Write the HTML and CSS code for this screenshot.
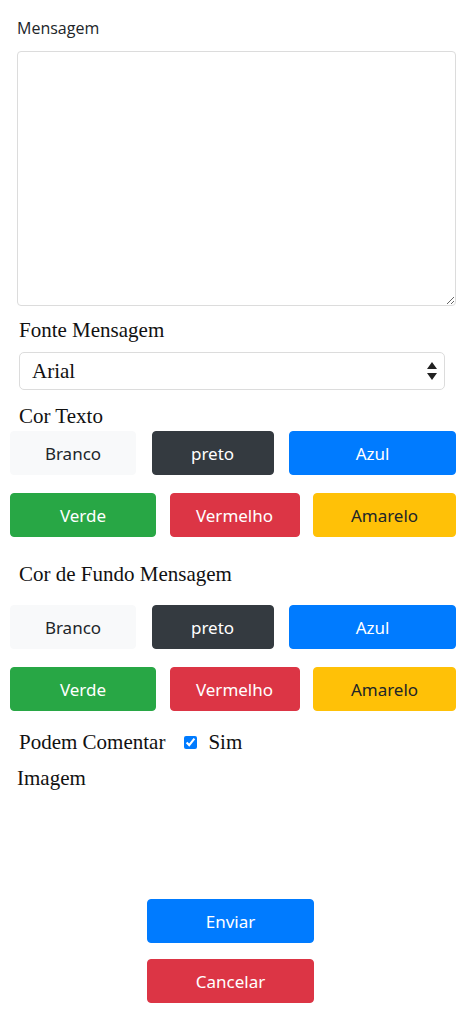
FILE: index.html
```html
<!DOCTYPE html>
<html lang="pt">
<head>
<meta charset="utf-8">
<link rel="stylesheet" href="styles.css">
</head>
<body>
<form class="form">
  <label class="lbl-sans">Mensagem</label>
  <textarea class="msg"></textarea>

  <div class="lbl-serif">Fonte Mensagem</div>
  <div class="select-wrap">
    <select class="select"><option>Arial</option></select>
    <svg class="arrows" width="10" height="18" viewBox="0 0 10 18"><path d="M5 0 L10 7 L0 7 Z M5 18 L10 11 L0 11 Z" fill="#222"/></svg>
  </div>

  <div class="lbl-serif lbl-cor">Cor Texto</div>
  <div class="row r1">
    <button type="button" class="btn light w1">Branco</button>
    <button type="button" class="btn dark w2">preto</button>
    <button type="button" class="btn primary w3">Azul</button>
  </div>
  <div class="row r2">
    <button type="button" class="btn success v1">Verde</button>
    <button type="button" class="btn danger v2">Vermelho</button>
    <button type="button" class="btn warning v3">Amarelo</button>
  </div>

  <div class="lbl-serif lbl-fundo">Cor de Fundo Mensagem</div>
  <div class="row r1 r3">
    <button type="button" class="btn light w1">Branco</button>
    <button type="button" class="btn dark w2">preto</button>
    <button type="button" class="btn primary w3">Azul</button>
  </div>
  <div class="row r2">
    <button type="button" class="btn success v1">Verde</button>
    <button type="button" class="btn danger v2">Vermelho</button>
    <button type="button" class="btn warning v3">Amarelo</button>
  </div>

  <div class="lbl-serif comment">
    <span>Podem Comentar</span>
    <input type="checkbox" class="chk" checked>
    <span>Sim</span>
  </div>
  <div class="lbl-serif imagem">Imagem</div>

  <div class="actions">
    <button type="button" class="btn primary act">Enviar</button>
    <button type="button" class="btn danger act act2">Cancelar</button>
  </div>
</form>
</body>
</html>
```
FILE: styles.css
```css
* { box-sizing: border-box; }
html, body { margin: 0; padding: 0; background: #fff; }
body { width: 474px; color: #212529; }
.form { display: flex; flex-direction: column; padding: 0 18px 0 0; }

.lbl-sans {
  font-family: "Open Sans", "Noto Sans", sans-serif;
  font-size: 16px;
  line-height: 22px;
  margin: 17px 0 0 17px;
}
.msg {
  display: block;
  margin: 12px 0 0 17px;
  width: 439px;
  height: 255px;
  border: 1px solid #dcdcdc;
  border-radius: 4px;
  resize: vertical;
  font-family: "Open Sans", sans-serif;
}
.lbl-serif {
  font-family: "Liberation Serif", "DejaVu Serif", serif;
  font-size: 21px;
  line-height: 24px;
  color: #111;
  margin: 12px 0 0 19px;
}
.select-wrap {
  position: relative;
  margin: 10px 0 0 19px;
  width: 426px;
  height: 38px;
}
.select {
  appearance: none;
  -webkit-appearance: none;
  width: 100%;
  height: 100%;
  border: 1px solid #dcdcdc;
  border-radius: 5px;
  background: #fff;
  padding: 0 12px;
  font-family: "Liberation Serif", serif;
  font-size: 21px;
  color: #111;
}
.arrows { position: absolute; right: 8px; top: 10px; pointer-events: none; }

.lbl-cor { margin-top: 14px; }
.row { display: flex; margin: 3px 0 0 10px; width: 446px; justify-content: space-between; }
.r2 { margin-top: 18px; }
.r3 { margin-top: 19px; }
.lbl-fundo { margin-top: 25px; }

.btn {
  height: 44px;
  border: 1px solid transparent;
  border-radius: 4px;
  font-family: "Noto Sans", "Open Sans", sans-serif;
  font-size: 17px;
  padding: 0;
  cursor: pointer;
}
.w1 { width: 126px; }
.w2 { width: 122px; }
.w3 { width: 167px; }
.v1 { width: 146px; }
.v2 { width: 130px; }
.v3 { width: 143px; }
.light { background: #f8f9fa; border-color: #f8f9fa; color: #212529; }
.dark { background: #343a40; border-color: #343a40; color: #fff; }
.primary { background: #007bff; border-color: #007bff; color: #fff; }
.success { background: #28a745; border-color: #28a745; color: #fff; }
.danger { background: #dc3545; border-color: #dc3545; color: #fff; }
.warning { background: #ffc107; border-color: #ffc107; color: #212529; }

.comment { margin-top: 19px; display: flex; align-items: center; }
.chk { width: 13px; height: 13px; margin: 0 11px 0 19px; accent-color: #007bff; }
.imagem { margin: 12px 0 0 17px; }

.actions { display: flex; flex-direction: column; align-items: flex-start; margin: 109px 0 0 147px; }
.act { width: 167px; }
.act2 { margin-top: 16px; }
```
